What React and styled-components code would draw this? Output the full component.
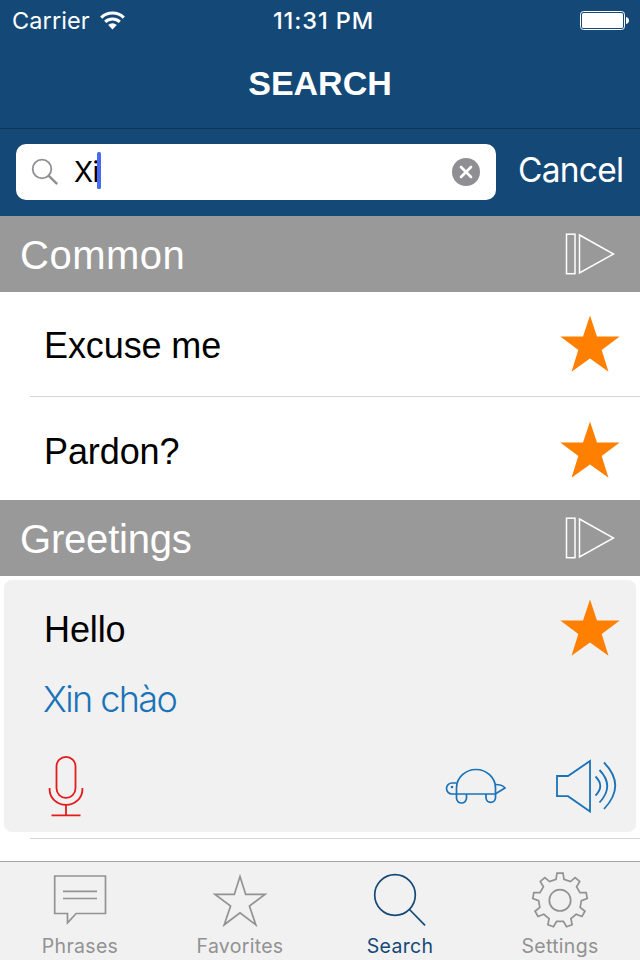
import React from "react";
import styled, { createGlobalStyle } from "styled-components";

const NAVY = "#144977";
const BLUE = "#1a73b8";
const GREY = "#929292";

const GlobalStyle = createGlobalStyle`
  *, *::before, *::after { box-sizing: border-box; }
  body { margin: 0; background: #fff; }
`;

const system = `Inter, "Liberation Sans", sans-serif`;
const helvetica = `"Liberation Sans", Arial, sans-serif`;

const Screen = styled.div`
  display: flex;
  flex-direction: column;
  width: 640px;
  height: 960px;
  overflow: hidden;
  background: #fff;
  font-family: ${helvetica};
`;

const Header = styled.header`
  flex: none;
  background: ${NAVY};
  color: #fff;
`;

const StatusBar = styled.div`
  display: grid;
  grid-template-columns: 1fr auto 1fr;
  align-items: center;
  height: 40px;
  padding: 1px 11px 0 12px;
  font: 400 23.5px/40px ${system};
`;

const Carrier = styled.span`
  display: flex;
  align-items: center;
  gap: 10px;
  letter-spacing: 0.1px;
`;

const Clock = styled.span`
  font-weight: 500;
  letter-spacing: 0.9px;
  padding-left: 6px;
`;

const BatterySlot = styled.span`
  display: flex;
  justify-content: flex-end;
`;

const Title = styled.h1`
  margin: 0;
  height: 89px;
  border-bottom: 1px solid #103454;
  font: 700 34px/87px ${helvetica};
  text-align: center;
`;

const SearchBar = styled.div`
  display: flex;
  align-items: center;
  height: 87px;
  padding: 0 16px 1px;
`;

const Field = styled.div`
  display: flex;
  flex: none;
  align-items: center;
  width: 480px;
  height: 56px;
  padding: 0 16px 0 15px;
  border-radius: 10px;
  background: #fff;
`;

const Query = styled.span`
  margin-left: 15px;
  color: #000;
  font: 400 28px/54px ${system};
  letter-spacing: -0.7px;
`;

const Caret = styled.span`
  width: 4px;
  height: 37px;
  margin: 0 auto 3px -1px;
  border-radius: 1.5px;
  background: #466bf0;
`;

const Cancel = styled.span`
  margin: 0 0 4px 22px;
  font: 400 33.5px/54px ${system};
  letter-spacing: -0.75px;
  white-space: nowrap;
`;

const List = styled.main`
  flex: 1;
  min-height: 0;
  overflow: hidden;
`;

const SectionHeader = styled.h2`
  display: flex;
  justify-content: space-between;
  align-items: center;
  height: 76px;
  margin: 0;
  padding: 0 25px 0 20px;
  background: #999;
  color: #fff;
  font: 400 40px/76px ${helvetica};
`;

const SectionName = styled.span`
  padding-top: 2px;
  letter-spacing: ${(p) => p.$spacing};
`;

const Row = styled.div`
  display: flex;
  justify-content: space-between;
  align-items: flex-start;
  height: ${(p) => p.$height}px;
  padding: 23px 20px 0 44px;
`;

const Phrase = styled.span`
  padding-top: 8px;
  color: #000;
  font: 400 36px/45px ${helvetica};
  letter-spacing: -0.1px;
`;

const Divider = styled.div`
  height: 1px;
  margin: ${(p) => p.$top || 0}px 0 1px 30px;
  background: #d5d5d6;
`;

const Card = styled.article`
  height: 252px;
  margin: 4px 4px 0;
  border-radius: 8px;
  background: #f1f1f1;
`;

const CardTop = styled.div`
  display: flex;
  justify-content: space-between;
  height: 88px;
  padding: 19px 16px 0 40px;
`;

const Translation = styled.p`
  height: 64px;
  margin: 0;
  padding-left: 39px;
  color: ${BLUE};
  font: 300 36px/63px ${system};
  letter-spacing: -1.6px;
`;

const Actions = styled.div`
  display: flex;
  align-items: center;
  height: 108px;
  padding: 0 19px 0 43px;
`;

const Playback = styled.div`
  display: flex;
  align-items: center;
  gap: 48px;
  margin-left: auto;
`;

const TabBar = styled.nav`
  display: grid;
  grid-template-columns: repeat(4, 1fr);
  flex: none;
  height: 99px;
  border-top: 1px solid #a3a3a3;
  background: #f1f1f1;
`;

const Tab = styled.div`
  display: flex;
  flex-direction: column;
  align-items: center;
  padding-top: 8px;
  color: ${(p) => (p.$active ? NAVY : GREY)};
  font: 400 19.5px/24px ${system};
  letter-spacing: 0.3px;
`;

const TabIcon = styled.svg`
  width: 60px;
  height: 60px;
  margin-bottom: 4px;
  fill: none;
  stroke: currentColor;
  stroke-width: 1.7;
`;

const Icon = styled.svg`
  display: block;
  flex: none;
  fill: none;
`;

const Wifi = () => (
  <Icon width="25" height="20" viewBox="0 0 25 20">
    <g stroke="#fff" strokeWidth="3">
      <path d="M1.2 6.6a16.3 16.3 0 0 1 22.6 0" />
      <path d="M5.2 10.8a10.6 10.6 0 0 1 14.6 0" />
    </g>
    <path d="M8.2 14.1a6.2 6.2 0 0 1 8.6 0L12.5 18.6z" fill="#fff" />
  </Icon>
);

const Battery = () => (
  <Icon width="49" height="20" viewBox="0 0 49 20">
    <rect x="0.5" y="0.5" width="44" height="18" rx="3" stroke="#fff" />
    <rect x="2" y="2" width="41" height="15" rx="1.5" fill="#fff" />
    <path d="M46 6c1.7.3 3 1.5 3 3.5s-1.3 3.2-3 3.5z" fill="#fff" />
  </Icon>
);

const FieldGlass = () => (
  <Icon width="28" height="28" viewBox="0 0 28 28" stroke="#8e8e93">
    <circle cx="11" cy="11" r="9.3" strokeWidth="1.8" />
    <path d="M17.8 17.8L25.5 25.3" strokeWidth="2.5" strokeLinecap="round" />
  </Icon>
);

const Clear = () => (
  <Icon width="28" height="28" viewBox="0 0 28 28">
    <circle cx="14" cy="14" r="14" fill="#8e8e93" />
    <path d="M9 9l10 10M19 9L9 19" stroke="#fff" strokeWidth="2.7" strokeLinecap="round" />
  </Icon>
);

const PlayAll = () => (
  <Icon width="50" height="42" viewBox="0 0 50 42" stroke="#fff" strokeWidth="1.5">
    <rect x="1.5" y="1.2" width="8.5" height="39.5" />
    <path d="M14.5 2L48.5 21 14.5 40z" />
  </Icon>
);

const FilledStar = () => (
  <Icon width="60" height="58" viewBox="0 0 60 58">
    <path d="M30 0.5L37 21.5H59.7L41.7 35 48.5 56.7 30 43.4 11.5 56.7 18.3 35 0.3 21.5H23z" fill="#ff8000" />
  </Icon>
);

const Microphone = () => (
  <Icon width="38" height="62" viewBox="0 0 38 62" stroke="#e31b1b" strokeWidth="1.8">
    <rect x="9.5" y="1.8" width="19" height="41" rx="9.5" />
    <path d="M2.6 33v1.5a16.4 15.4 0 0 0 32.8 0V33M19 50v10M4.5 60.3h29" />
  </Icon>
);

const Turtle = () => (
  <Icon width="62" height="38" viewBox="0 0 62 38" stroke={BLUE} strokeWidth="1.7">
    <path d="M11.5 27V21a19.5 18.5 0 0 1 39 0V27z" />
    <path d="M11.5 16H7a5.5 5.5 0 0 0 0 11h4.5M11.5 27v4a5 5 0 0 0 10 0v-4M41 27v4a4.8 5 0 0 0 9.5 0v-4M50.5 17.5q7 0 9.5 3.600l-9 5.500" />
    <circle cx="7" cy="20" r="1.3" fill={BLUE} stroke="none" />
  </Icon>
);

const Speaker = () => (
  <Icon width="62" height="54" viewBox="0 0 62 54" stroke={BLUE} strokeWidth="1.8">
    <path d="M2 17H13L35 2V52.5L13 37.2H2z" />
    <path d="M40.5 17.5q9.5 9.500 0 19M44.5 11q15.5 16 0 32.5M49 3.5q22.5 23 0 46.5" />
  </Icon>
);

const GEAR_TEETH = 9;
const gearPoints = Array.from({ length: GEAR_TEETH }, (_, i) => {
  const turn = (i * 2 * Math.PI) / GEAR_TEETH;
  return [[-4, -21], [-3, -27.1], [3, -27.1], [4, -21]]
    .map(([x, y]) => {
      const px = 30 + x * Math.cos(turn) - y * Math.sin(turn);
      const py = 30.3 + x * Math.sin(turn) + y * Math.cos(turn);
      return `${px.toFixed(2)},${py.toFixed(2)}`;
    })
    .join(" ");
}).join(" ");

const tabs = [
  {
    label: "Phrases",
    icon: <path d="M4.7 6H55.5V43.5H26.2L17.5 52.8V43.5H4.7zM13 21.3H47M13 28.5H47" />,
  },
  {
    label: "Favorites",
    icon: <path d="M30 6.5L35.7 24.4H55L39.4 36 45.8 54.8 30 42.8 14.2 54.8 20.6 36 5 24.4H24.3z" />,
  },
  {
    label: "Search",
    active: true,
    icon: (
      <>
        <circle cx="25" cy="25" r="20.3" />
        <path d="M39.5 39.5L55 55.3" />
      </>
    ),
  },
  {
    label: "Settings",
    icon: (
      <>
        <polygon points={gearPoints} />
        <circle cx="30" cy="30.3" r="10.7" />
      </>
    ),
  },
];

const Section = ({ name, spacing }) => (
  <SectionHeader>
    <SectionName $spacing={spacing}>{name}</SectionName>
    <PlayAll />
  </SectionHeader>
);

export default function App() {
  return (
    <Screen>
      <GlobalStyle />
      <Header>
        <StatusBar>
          <Carrier>
            Carrier
            <Wifi />
          </Carrier>
          <Clock>11:31 PM</Clock>
          <BatterySlot>
            <Battery />
          </BatterySlot>
        </StatusBar>
        <Title>SEARCH</Title>
        <SearchBar>
          <Field>
            <FieldGlass />
            <Query>Xi</Query>
            <Caret />
            <Clear />
          </Field>
          <Cancel>Cancel</Cancel>
        </SearchBar>
      </Header>
      <List>
        <Section name="Common" spacing="0.5px" />
        <Row $height={104}>
          <Phrase>Excuse me</Phrase>
          <FilledStar />
        </Row>
        <Divider />
        <Row $height={102}>
          <Phrase>Pardon?</Phrase>
          <FilledStar />
        </Row>
        <Section name="Greetings" spacing="-0.2px" />
        <Card>
          <CardTop>
            <Phrase>Hello</Phrase>
            <FilledStar />
          </CardTop>
          <Translation>Xin chào</Translation>
          <Actions>
            <Microphone />
            <Playback>
              <Turtle />
              <Speaker />
            </Playback>
          </Actions>
        </Card>
        <Divider $top={6} />
      </List>
      <TabBar>
        {tabs.map((tab) => (
          <Tab key={tab.label} $active={tab.active}>
            <TabIcon viewBox="0 0 60 60">{tab.icon}</TabIcon>
            {tab.label}
          </Tab>
        ))}
      </TabBar>
    </Screen>
  );
}
